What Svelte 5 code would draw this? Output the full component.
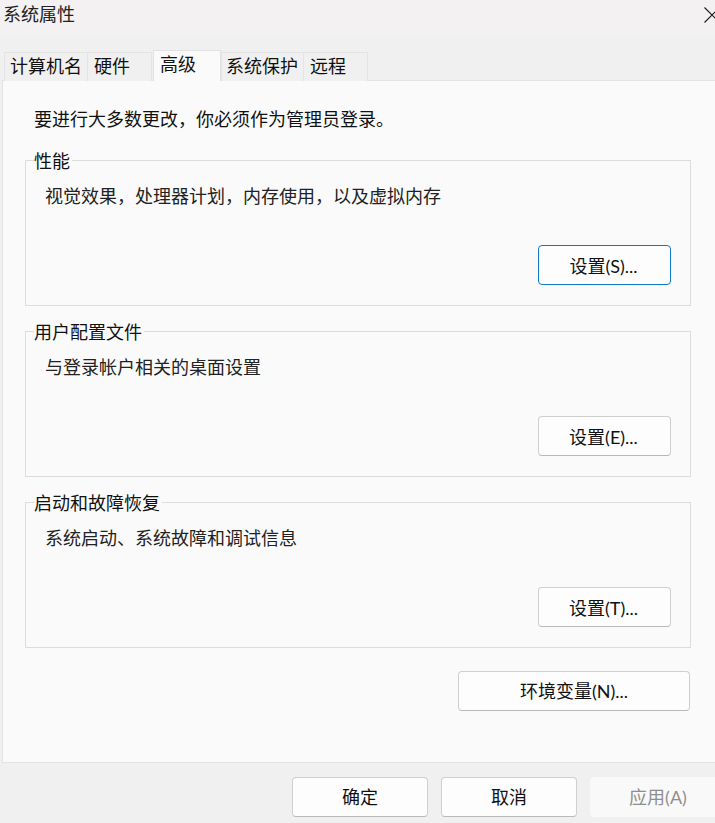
<script>
  const tabs = [
    { label: '计算机名', w: 84, pad: 5, gap: -1 },
    { label: '硬件', w: 65, pad: 6, gap: 0 },
    { label: '高级', w: 68, pad: 6, gap: 0, active: true },
    { label: '系统保护', w: 83, pad: 4, gap: -1 },
    { label: '远程', w: 65, pad: 6, gap: 0 }
  ];
  const groups = [
    { title: '性能', text: '视觉效果，处理器计划，内存使用，以及虚拟内存', btn: '设置(S)...', focus: true },
    { title: '用户配置文件', text: '与登录帐户相关的桌面设置', btn: '设置(E)...' },
    { title: '启动和故障恢复', text: '系统启动、系统故障和调试信息', btn: '设置(T)...' }
  ];
</script>

<div class="window">
  <header class="titlebar">
    <span class="title">系统属性</span>
    <svg class="close" width="11" height="16" viewBox="0 0 11 16" aria-hidden="true">
      <path d="M0.5 0.5 L15.5 15.5 M15.5 0.5 L0.5 15.5" stroke="#1a1a1a" stroke-width="1.1" fill="none" />
    </svg>
  </header>

  <div class="body">
    <nav class="tabs">
      {#each tabs as t}
        <div
          class="tab"
          class:active={t.active}
          style="width:{t.w}px;padding-left:{t.pad}px;margin-right:{t.gap}px"
        >{t.label}</div>
      {/each}
    </nav>

    <main class="panel">
      <p class="intro">要进行大多数更改，你必须作为管理员登录。</p>
      {#each groups as g}
        <section class="group">
          <span class="legend">{g.title}</span>
          <p class="desc">{g.text}</p>
          <div class="row">
            <button class="btn small" class:focus={g.focus}>{g.btn}</button>
          </div>
        </section>
      {/each}
      <div class="env">
        <button class="btn wide">环境变量(N)...</button>
      </div>
    </main>

    <footer class="footer">
      <button class="btn foot">确定</button>
      <button class="btn foot">取消</button>
      <button class="btn foot disabled">应用(A)</button>
    </footer>
  </div>
</div>

<style>
  :global(body) {
    margin: 0;
    background: #f0f0f0;
  }
  .window {
    width: 715px;
    height: 823px;
    overflow: hidden;
    display: flex;
    flex-direction: column;
    font-family: "Noto Sans CJK SC", "Noto Sans", sans-serif;
    font-size: 18px;
    color: #111;
  }
  .titlebar {
    height: 37px;
    flex: none;
    background: #f3f1f1;
    display: flex;
    align-items: flex-start;
    justify-content: space-between;
    padding-left: 3px;
  }
  .title {
    line-height: 26px;
    color: #222;
  }
  .close {
    margin-top: 7px;
  }
  .body {
    flex: 1;
    display: flex;
    flex-direction: column;
    background: #f0f0f0;
  }
  .tabs {
    display: flex;
    align-items: flex-end;
    height: 44px;
    padding-left: 4px;
    flex: none;
    position: relative;
    z-index: 1;
    margin-bottom: -1px;
  }
  .tab {
    box-sizing: border-box;
    height: 29px;
    border: 1px solid #e4e4e4;
    border-bottom: none;
    background: #f0f0f0;
    line-height: 24px;
    white-space: nowrap;
  }
  .tab.active {
    height: 31px;
    background: #fafafa;
    border-color: #e2e2e2;
    margin-left: 1px;
    line-height: 24px;
  }
  .panel {
    box-sizing: border-box;
    height: 683px;
    flex: none;
    margin-left: 2px;
    background: #fafafa;
    border-top: 1px solid #e3e3e3;
    border-left: 1px solid #e3e3e3;
    border-bottom: 1px solid #e3e3e3;
    padding: 0 24px 0 22px;
  }
  .intro {
    margin: 0;
    padding: 24px 0 0 9px;
    line-height: 26px;
    height: 55px;
    box-sizing: content-box;
  }
  .group {
    position: relative;
    box-sizing: border-box;
    height: 146px;
    border: 1px solid #dcdcdc;
    margin-bottom: 25px;
    padding: 21px 19px 20px 19px;
  }
  .legend {
    position: absolute;
    left: 8px;
    top: -14px;
    line-height: 26px;
    background: #fafafa;
    padding-right: 2px;
  }
  .desc {
    margin: 0;
    line-height: 26px;
    height: 63px;
    color: #222;
  }
  .row {
    display: flex;
    justify-content: flex-end;
  }
  .btn {
    box-sizing: border-box;
    height: 40px;
    font: inherit;
    font-family: Lato, "Noto Sans CJK SC", sans-serif;
    line-height: 36px;
    color: #111;
    background: #fdfdfd;
    border: 1px solid #cfcfcf;
    border-bottom-color: #b9b9b9;
    border-radius: 4px;
    padding: 0;
  }
  .btn.small {
    width: 133px;
    padding: 2px 2px 0 0;
  }
  .btn.focus {
    border: 1px solid #0f78c8;
  }
  .env {
    display: flex;
    justify-content: flex-end;
    margin-top: -2px;
    padding-right: 1px;
  }
  .btn.wide {
    width: 232px;
  }
  .footer {
    display: flex;
    gap: 13px;
    padding: 14px 0 0 292px;
  }
  .btn.foot {
    width: 136px;
    flex: none;
  }
  .btn.disabled {
    background: #f9f9f9;
    border-color: #f9f9f9;
    color: #8f8f8f;
  }
</style>
